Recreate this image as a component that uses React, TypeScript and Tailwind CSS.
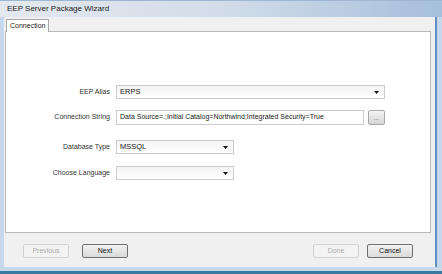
const FONT = { fontFamily: '"Liberation Sans", Arial, sans-serif' };

function Caret() {
  return (
    <svg width="5" height="3" viewBox="0 0 5 3" className="shrink-0">
      <path d="M0 0h5L2.5 3z" fill="#111" />
    </svg>
  );
}

function Combo({ value, width }: { value: string; width: string }) {
  return (
    <div
      className={`${width} h-[14px] flex items-center justify-between pl-[3px] pr-[5px] border border-[#cbcbcb] bg-gradient-to-b from-[#f4f4f4] to-white text-[7.5px] text-[#222]`}
    >
      <span>{value}</span>
      <Caret />
    </div>
  );
}

function Row({ label, children, className = '' }: { label: string; children: React.ReactNode; className?: string }) {
  return (
    <div className={`flex items-center gap-[6px] ${className}`}>
      <span className="w-[104px] text-right text-[7px] text-[#333]">{label}</span>
      {children}
    </div>
  );
}

function Button({ label, disabled }: { label: string; disabled?: boolean }) {
  return (
    <button
      className={`w-[46px] h-[14px] flex items-center justify-center text-[7px] rounded-[2px] border ${
        disabled
          ? 'border-[#d2d2d2] bg-[#f3f3f3] text-[#ababab]'
          : 'border-[#707070] bg-gradient-to-b from-[#f2f2f2] to-[#dadada] text-[#111]'
      }`}
    >
      {label}
    </button>
  );
}

export default function App() {
  return (
    <div style={FONT} className="w-[442px] h-[274px] flex flex-col bg-[#c6d9ec] overflow-hidden">
      {/* Title bar */}
      <div className="h-[17px] shrink-0 flex items-center pl-[7px] bg-gradient-to-r from-[#e4e8ee] via-[#d2dde9] to-[#a6bfdc] border-t border-[#9fb6d2]">
        <span className="text-[8px] text-[#222]">EEP Server Package Wizard</span>
      </div>

      <div className="flex-1 flex pl-[4px] pr-[5px] pb-[4px] border-b-[3px] border-[#3b7aa0]">
        <div className="flex-1 flex flex-col bg-[#f0f0f0] border-r-[2px] border-[#5f8fc0]">
          {/* Tab strip */}
          <div className="h-[14px] shrink-0 flex items-end pl-[2px]">
            <div className="h-[13px] w-[43px] flex items-center pl-[3px] bg-white border border-b-0 border-[#a8a8a8] text-[7px] text-[#222] -mb-px relative z-10">
              Connection
            </div>
          </div>

          {/* Tab panel */}
          <div className="h-[202px] shrink-0 ml-[1px] mr-[4px] bg-white border border-[#b8b8b8] pt-[53px]">
            <Row label="EEP Alias">
              <Combo value="ERPS" width="w-[269px]" />
            </Row>
            <Row label="Connection String" className="mt-[11px]">
              <div className="w-[248px] h-[15px] flex items-center pl-[3px] border border-[#cbcbcb] bg-white text-[7px] text-[#222] whitespace-nowrap overflow-hidden">
                Data Source=.;Initial Catalog=Northwind;Integrated Security=True
              </div>
              <div className="-ml-[2px] w-[17px] h-[15px] flex items-end justify-center pb-[3px] border border-[#a8a8a8] rounded-[2px] bg-gradient-to-b from-[#f4f4f4] to-[#d6d6d6] text-[6px] leading-none text-[#444]">
                ...
              </div>
            </Row>
            <Row label="Database Type" className="mt-[15px]">
              <Combo value="MSSQL" width="w-[118px]" />
            </Row>
            <Row label="Choose Language" className="mt-[12px]">
              <Combo value="" width="w-[118px]" />
            </Row>
          </div>

          {/* Button bar */}
          <div className="flex-1 flex items-start pt-[11px] pl-[19px] pr-[22px]">
            <Button label="Previous" disabled />
            <div className="ml-[13px]">
              <Button label="Next" />
            </div>
            <div className="ml-auto">
              <Button label="Done" disabled />
            </div>
            <div className="ml-[8px]">
              <Button label="Cancel" />
            </div>
          </div>
        </div>
      </div>
    </div>
  );
}
